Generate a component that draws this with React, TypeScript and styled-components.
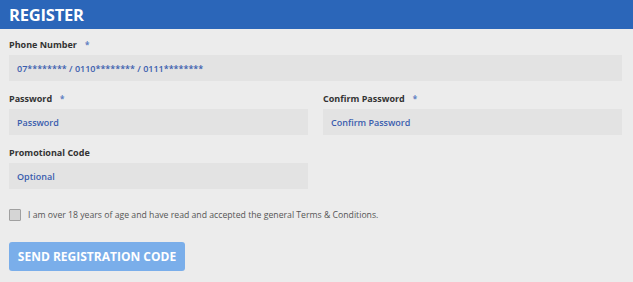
import React from 'react'
import styled, { createGlobalStyle } from 'styled-components'

const GlobalStyle = createGlobalStyle`
  html, body {
    margin: 0;
    padding: 0;
    background: #ececec;
    font-family: 'Open Sans', 'Noto Sans', sans-serif;
  }
`

const Header = styled.div`
  height: 29px;
  background: #2b66b9;
  display: flex;
  align-items: center;
  padding-left: 9px;
`

const Title = styled.h1`
  margin: 0;
  color: #fff;
  font-size: 16.5px;
  font-weight: 700;
  letter-spacing: -0.2px;
`

const Form = styled.form`
  padding: 9px 11px 0 9px;
  display: flex;
  flex-direction: column;
`

const Row = styled.div<{ $cols?: number }>`
  display: grid;
  grid-template-columns: repeat(${(p) => p.$cols ?? 1}, 1fr);
  column-gap: 15px;
  margin-bottom: 11px;
`

const Field = styled.div`
  display: flex;
  flex-direction: column;
`

const Label = styled.label`
  font-size: 9px;
  font-weight: 700;
  color: #333;
  height: 17px;
  line-height: 14px;
`

const Star = styled.span`
  color: #5f80c2;
  font-size: 8px;
  margin-left: 8px;
`

const Input = styled.div`
  height: 26px;
  background: #e3e3e3;
  display: flex;
  align-items: center;
  padding-left: 8px;
  font-size: 9px;
  font-weight: 600;
  color: #3a5dae;
`

const CheckRow = styled.div`
  display: flex;
  align-items: center;
  gap: 7px;
  margin-top: 9px;
  height: 12px;
`

const Box = styled.span`
  width: 10px;
  height: 10px;
  border: 1px solid #a0a0a0;
  background: #d5d5d5;
  border-radius: 1px;
`

const CheckText = styled.span`
  font-size: 8.7px;
  color: #555;
`

const Button = styled.button`
  margin-top: 21px;
  width: 176px;
  height: 29px;
  border: none;
  border-radius: 3px;
  background: #7aaeea;
  color: #fff;
  font-family: inherit;
  font-size: 12px;
  font-weight: 700;
  padding: 0;
`

export default function App() {
  return (
    <>
      <GlobalStyle />
      <Header>
        <Title>REGISTER</Title>
      </Header>
      <Form>
        <Row>
          <Field>
            <Label>
              Phone Number<Star>*</Star>
            </Label>
            <Input>07******** / 0110******** / 0111********</Input>
          </Field>
        </Row>
        <Row $cols={2}>
          <Field>
            <Label>
              Password<Star>*</Star>
            </Label>
            <Input>Password</Input>
          </Field>
          <Field>
            <Label>
              Confirm Password<Star>*</Star>
            </Label>
            <Input>Confirm Password</Input>
          </Field>
        </Row>
        <Row $cols={2}>
          <Field>
            <Label>Promotional Code</Label>
            <Input>Optional</Input>
          </Field>
        </Row>
        <CheckRow>
          <Box />
          <CheckText>I am over 18 years of age and have read and accepted the general Terms &amp; Conditions.</CheckText>
        </CheckRow>
        <div>
          <Button type="button">SEND REGISTRATION CODE</Button>
        </div>
      </Form>
    </>
  )
}
